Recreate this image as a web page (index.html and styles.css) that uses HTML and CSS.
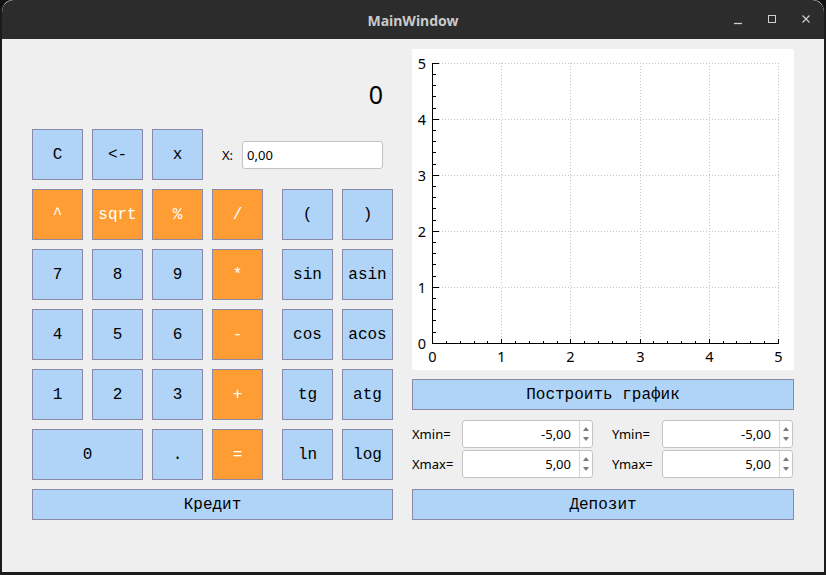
FILE: index.html
```html
<!DOCTYPE html>
<html>
<head>
<meta charset="utf-8">
<link rel="stylesheet" href="styles.css">
</head>
<body>
<div class="window">
  <div class="titlebar">
    <span class="title">MainWindow</span>
    <div class="controls">
      <svg class="ctl" width="12" height="12" viewBox="0 0 12 12"><path d="M2 9.5H10" stroke="#cfcfcf" stroke-width="1.3"/></svg>
      <svg class="ctl" width="12" height="12" viewBox="0 0 12 12"><rect x="2.5" y="1.5" width="7" height="7" fill="none" stroke="#cfcfcf" stroke-width="1"/></svg>
      <svg class="ctl" width="12" height="12" viewBox="0 0 12 12"><path d="M2.5 1.5L9.5 8.5M9.5 1.5L2.5 8.5" stroke="#cfcfcf" stroke-width="1.2"/></svg>
    </div>
  </div>
  <div class="content">
    <div class="left">
      <div class="display">0</div>
      <div class="row1">
        <button class="key">C</button>
        <button class="key">&lt;-</button>
        <button class="key">x</button>
        <label class="xlabel">X:</label>
        <div class="xinput">0,00</div>
      </div>
      <div class="keys">
        <div class="grid4">
          <button class="key op">^</button>
          <button class="key op">sqrt</button>
          <button class="key op">%</button>
          <button class="key op">/</button>
          <button class="key">7</button>
          <button class="key">8</button>
          <button class="key">9</button>
          <button class="key op">*</button>
          <button class="key">4</button>
          <button class="key">5</button>
          <button class="key">6</button>
          <button class="key op">-</button>
          <button class="key">1</button>
          <button class="key">2</button>
          <button class="key">3</button>
          <button class="key op">+</button>
          <button class="key span2">0</button>
          <button class="key">.</button>
          <button class="key op">=</button>
        </div>
        <div class="grid2">
          <button class="key">(</button>
          <button class="key">)</button>
          <button class="key">sin</button>
          <button class="key">asin</button>
          <button class="key">cos</button>
          <button class="key">acos</button>
          <button class="key">tg</button>
          <button class="key">atg</button>
          <button class="key">ln</button>
          <button class="key">log</button>
        </div>
      </div>
      <button class="key wide">Кредит</button>
    </div>
    <div class="right">
      <div class="plot">
        <svg width="382" height="321" viewBox="0 0 382 321">
          <g stroke="#c4c4c4" stroke-width="1" stroke-dasharray="1 2" fill="none">
            <path d="M89.5 14V294M158.5 14V294M228.5 14V294M297.5 14V294M366.5 14V294"/>
            <path d="M21 238.5H367M21 182.5H367M21 126.5H367M21 70.5H367M21 14.5H367"/>
          </g>
          <g stroke="#000" stroke-width="1" fill="none">
            <path d="M20.5 14V295M20 294.5H367"/>
            <path d="M20 14.5H27M20 70.5H27M20 126.5H27M20 182.5H27M20 238.5H27"/>
            <path d="M20 25.5H24M20 36.5H24M20 47.5H24M20 59.5H24M20 81.5H24M20 92.5H24M20 103.5H24M20 115.5H24M20 137.5H24M20 148.5H24M20 159.5H24M20 171.5H24M20 193.5H24M20 204.5H24M20 215.5H24M20 227.5H24M20 249.5H24M20 260.5H24M20 271.5H24M20 283.5H24"/>
            <path d="M89.5 295V290M158.5 295V290M228.5 295V290M297.5 295V290M366.5 295V290"/>
            <path d="M34.5 295V292M48.5 295V292M62.5 295V292M75.5 295V292M103.5 295V292M117.5 295V292M131.5 295V292M145.5 295V292M172.5 295V292M186.5 295V292M200.5 295V292M214.5 295V292M241.5 295V292M255.5 295V292M269.5 295V292M283.5 295V292M311.5 295V292M324.5 295V292M338.5 295V292M352.5 295V292"/>
          </g>
          <g class="ticklbl" text-anchor="end">
            <text x="14" y="20">5</text>
            <text x="14" y="76">4</text>
            <text x="14" y="132">3</text>
            <text x="14" y="188">2</text>
            <text x="14" y="244">1</text>
            <text x="14" y="299.5">0</text>
          </g>
          <g class="ticklbl" text-anchor="middle">
            <text x="20.5" y="312.5">0</text>
            <text x="89.5" y="312.5">1</text>
            <text x="158.5" y="312.5">2</text>
            <text x="228.5" y="312.5">3</text>
            <text x="297.5" y="312.5">4</text>
            <text x="366.5" y="312.5">5</text>
          </g>
        </svg>
      </div>
      <button class="key wide">Построить график</button>
      <div class="ranges">
        <div class="range">
          <span class="rlabel">Xmin=</span>
          <div class="spin"><span class="val">-5,00</span><span class="arrows"><i class="up"></i><i class="down"></i></span></div>
        </div>
        <div class="range">
          <span class="rlabel">Ymin=</span>
          <div class="spin"><span class="val">-5,00</span><span class="arrows"><i class="up"></i><i class="down"></i></span></div>
        </div>
        <div class="range">
          <span class="rlabel">Xmax=</span>
          <div class="spin"><span class="val">5,00</span><span class="arrows"><i class="up"></i><i class="down"></i></span></div>
        </div>
        <div class="range">
          <span class="rlabel">Ymax=</span>
          <div class="spin"><span class="val">5,00</span><span class="arrows"><i class="up"></i><i class="down"></i></span></div>
        </div>
      </div>
      <button class="key wide deposit">Депозит</button>
    </div>
  </div>
</div>
</body>
</html>
```

FILE: styles.css
```css
html, body {
  margin: 0;
  padding: 0;
}
body {
  width: 826px;
  height: 575px;
  background: #101010;
  font-family: "Noto Sans", "Open Sans", sans-serif;
  overflow: hidden;
}
.window {
  width: 826px;
  height: 575px;
  box-sizing: border-box;
  background: #efefef;
  border-radius: 12px 12px 0 0;
  border-style: solid;
  border-color: #1b1b1b;
  border-width: 0 2px 3px 2px;
  overflow: hidden;
}
.titlebar {
  height: 39px;
  background: #2c2c2c;
  display: flex;
  align-items: center;
  justify-content: center;
  position: relative;
  border-radius: 12px 12px 0 0;
}
.title {
  color: #c9c9c9;
  font-weight: bold;
  font-size: 14px;
  margin-top: 2px;
}
.controls {
  position: absolute;
  right: 12px;
  top: 14px;
  display: flex;
  gap: 22px;
}
.ctl {
  display: block;
}
.content {
  display: flex;
  gap: 19px;
  padding: 10px 30px 0 30px;
}
.left {
  width: 361px;
  display: flex;
  flex-direction: column;
  gap: 9px;
}
.right {
  width: 382px;
  display: flex;
  flex-direction: column;
}
.display {
  height: 51px;
  padding-top: 20px;
  line-height: 51px;
  font-size: 25px;
  text-align: right;
  padding-right: 10px;
  color: #000;
}
.row1 {
  display: flex;
  align-items: center;
  gap: 9px;
}
.xlabel {
  font-size: 13px;
  margin-left: 10px;
  color: #000;
}
.xinput {
  flex: 1;
  height: 28px;
  box-sizing: border-box;
  margin-left: 0;
  margin-right: 10px;
  background: #fff;
  border: 1px solid #c3c3c3;
  border-radius: 3px;
  font-size: 13px;
  line-height: 26px;
  padding-left: 4px;
  color: #000;
}
.key {
  width: 51px;
  height: 51px;
  box-sizing: border-box;
  background: #b0d4f7;
  border: 1px solid #8a8aa6;
  border-radius: 0;
  font-family: "Liberation Mono", "DejaVu Sans Mono", monospace;
  font-size: 16px;
  color: #000;
  padding: 0;
  margin: 0;
}
.key.op {
  background: #fd9d33;
  color: #fff;
}
.keys {
  display: flex;
  gap: 19px;
}
.grid4 {
  display: grid;
  grid-template-columns: repeat(4, 51px);
  grid-auto-rows: 51px;
  gap: 9px;
}
.grid2 {
  display: grid;
  grid-template-columns: repeat(2, 51px);
  grid-auto-rows: 51px;
  gap: 9px;
}
.span2 {
  grid-column: span 2;
  width: auto;
}
.key.wide {
  width: 100%;
  height: 31px;
}
.plot {
  height: 321px;
  background: #fff;
  margin-bottom: 9px;
}
.plot svg {
  display: block;
}
.ticklbl text {
  font-family: "Noto Sans", sans-serif;
  font-size: 14.5px;
  fill: #000;
}
.ranges {
  margin-top: 10px;
  display: grid;
  grid-template-columns: 181px 181px;
  column-gap: 19px;
  row-gap: 2px;
}
.range {
  display: flex;
  align-items: center;
}
.rlabel {
  width: 50px;
  font-size: 13px;
  color: #000;
  white-space: nowrap;
  overflow: hidden;
}
.spin {
  width: 131px;
  height: 28px;
  box-sizing: border-box;
  background: #fff;
  border: 1px solid #c3c3c3;
  border-radius: 3px;
  display: flex;
}
.val {
  flex: 1;
  text-align: right;
  font-size: 13px;
  line-height: 26px;
  padding-right: 8px;
  color: #000;
}
.arrows {
  width: 12px;
  border-left: 1px solid #d6d6d6;
  display: flex;
  flex-direction: column;
  align-items: center;
  justify-content: center;
  gap: 6px;
}
.arrows i {
  display: block;
  width: 0;
  height: 0;
  border-left: 3.5px solid transparent;
  border-right: 3.5px solid transparent;
}
.arrows .up {
  border-bottom: 4px solid #7a7a7a;
}
.arrows .down {
  border-top: 4px solid #7a7a7a;
}
.deposit {
  margin-top: 11px;
}
```
